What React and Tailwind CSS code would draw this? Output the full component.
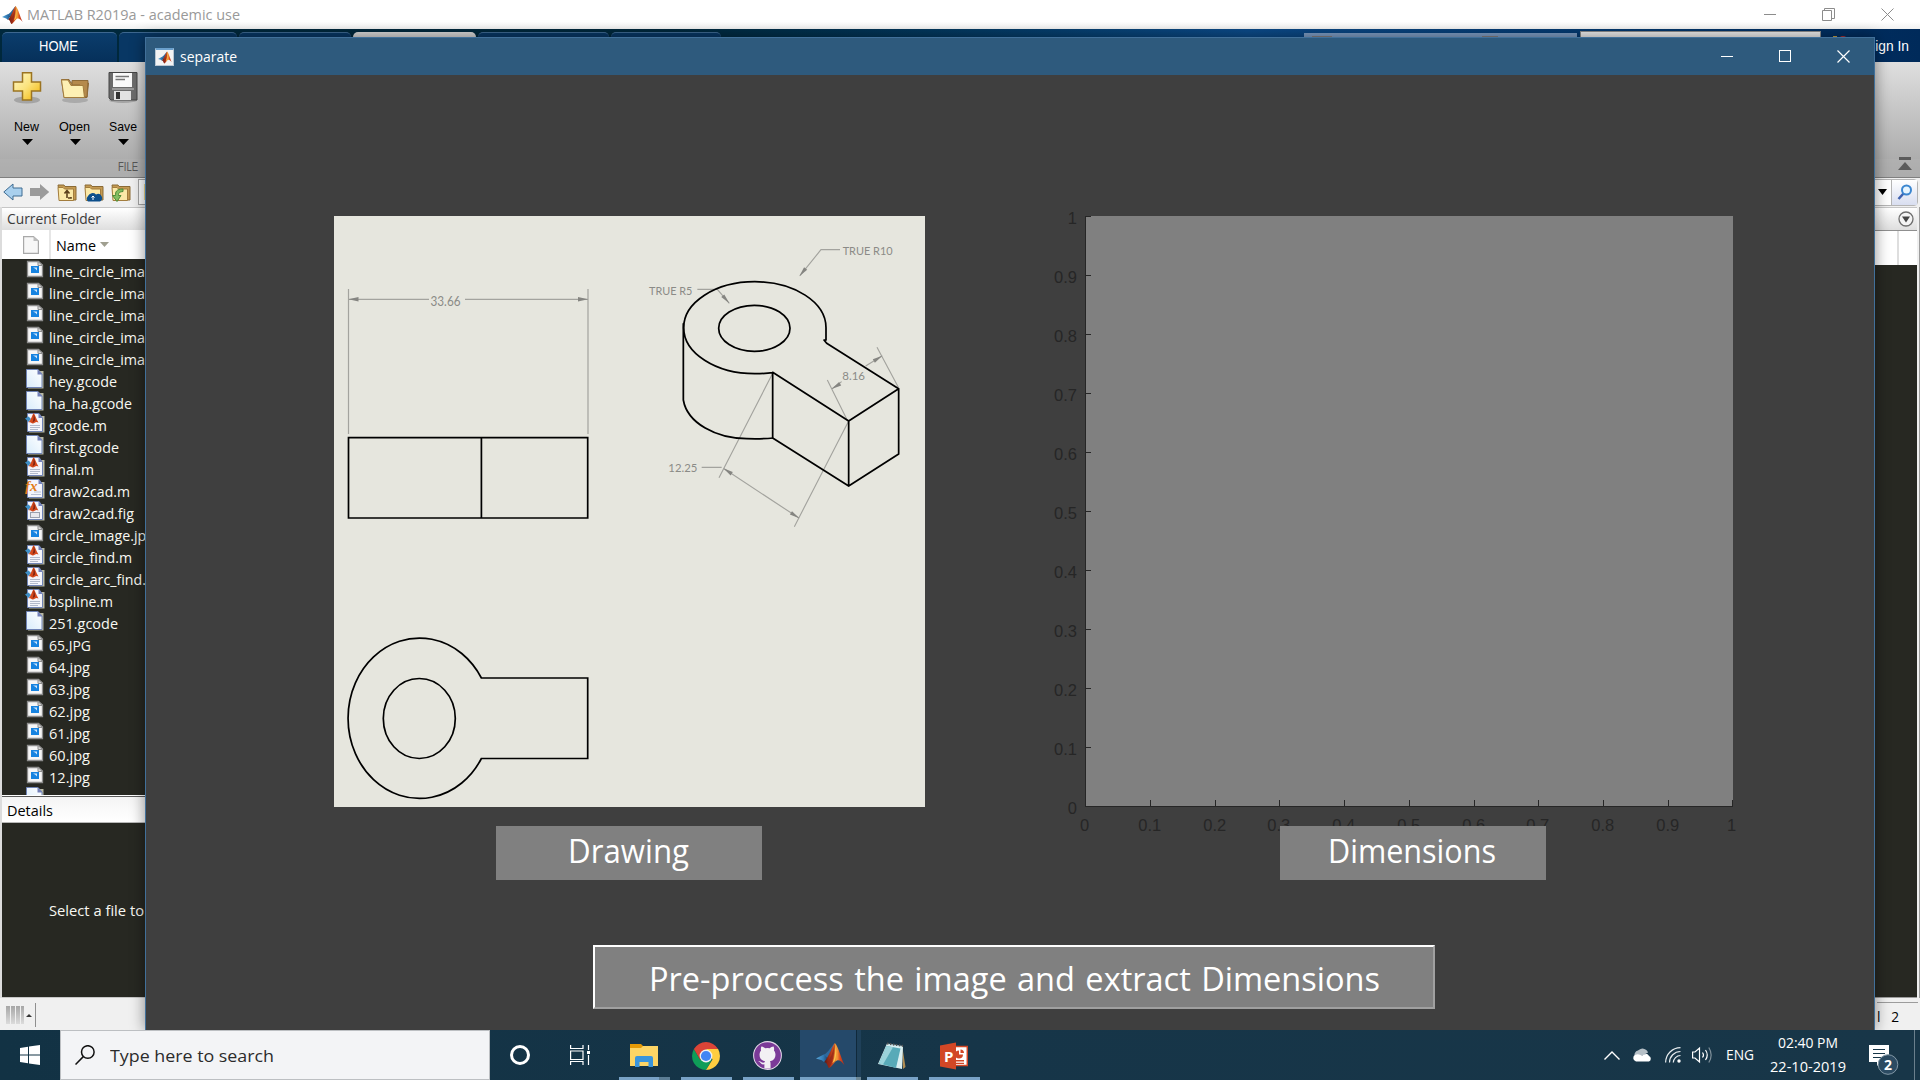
import React, { useLayoutEffect, useRef } from "react";

/* Single line of text condensed or widened to an exact advance width. */
function Fit({ w, children, className = "" }) {
  const ref = useRef(null);
  useLayoutEffect(() => {
    const el = ref.current;
    el.style.transform = "none";
    const natural = el.getBoundingClientRect().width;
    if (natural > 0) el.style.transform = `scaleX(${w / natural})`;
  }, [w, children]);
  return (
    <span className={`block shrink-0 whitespace-nowrap ${className}`} style={{ width: w }}>
      <span ref={ref} className="inline-block origin-left whitespace-pre">
        {children}
      </span>
    </span>
  );
}

function MatlabLogo({ className }) {
  return (
    <svg viewBox="0 0 30 27" className={className}>
      <defs>
        <linearGradient id="mlRed" x1="0" x2="1" y1="0" y2="0">
          <stop offset="0" stopColor="#5a1512" />
          <stop offset=".4" stopColor="#c6421c" />
          <stop offset=".62" stopColor="#f6a13a" />
          <stop offset=".78" stopColor="#d9481d" />
          <stop offset="1" stopColor="#a8291a" />
        </linearGradient>
        <linearGradient id="mlBlue" x1="0" x2="1" y1="0" y2="0">
          <stop offset="0" stopColor="#5aa7d8" />
          <stop offset=".6" stopColor="#2f79b4" />
          <stop offset="1" stopColor="#1c3c63" />
        </linearGradient>
      </defs>
      <path d="M0 16.5 8 12.5 12.5 14.5 8.5 20.5 6 18.5Z" fill="url(#mlBlue)" />
      <path d="M8 12.5C12 11 14 6.500 19.500.5L17 10 12.500 16.500Z" fill="#2d6a9f" />
      <path d="M19.500.5C16.500 4 15 11.500 8.500 20.500 10.500 19.800 12 23 13.200 26.500 17 25.500 19 19 22.500 18.500 25 18.400 27 20.500 29.500 23.500 25.500 15 23 4 19.500.5Z" fill="url(#mlRed)" />
      <path d="M19.300 1C18 6 17 14 11 21.500L13.200 26.300C17 22 19.500 12 19.300 1Z" fill="#8d2417" opacity=".65" />
      <path d="M19.500 1C20.500 7 20 14 17 21.500L19.600 19C21.500 13 21.200 6 19.500 1Z" fill="#fbc24b" />
    </svg>
  );
}

function Page({ kind }) {
  if (kind === "jpg")
    return (
      <svg viewBox="0 0 18 18" className="-mt-[4px] h-[18px] w-[18px]">
        <path d="M1.500 1.500H12.500L16.500 5V16.500H1.500Z" fill="#f6f6f6" stroke="#8d8d8d" strokeWidth="1.300" />
        <path d="M12 1.500V5.500H16.500Z" fill="#d8d8d8" stroke="#8d8d8d" />
        <rect x="5" y="6" width="8" height="7" fill="#1683e0" />
        <path d="M7 7.500H11V10.500L9.300 8.800Z" fill="#cfe6fb" />
      </svg>
    );
  if (kind === "file")
    return (
      <svg viewBox="0 0 18 20" className="-mt-[4px] h-[20px] w-[18px]">
        <defs>
          <linearGradient id="pg" x1="0" x2="1" y1="1" y2="0">
            <stop offset="0" stopColor="#d9ecfb" />
            <stop offset="1" stopColor="#ffffff" />
          </linearGradient>
        </defs>
        <path d="M2 2H17.500V19.500H2Z" fill="#b9b9a4" />
        <path d="M.500.500H12L16 5V18.500H.500Z" fill="url(#pg)" stroke="#6f83b5" />
        <path d="M11.500.500V5.500H16.500Z" fill="#7380b8" />
      </svg>
    );
  return (
    <svg viewBox="0 0 20 20" className="-ml-[1px] -mt-[4px] h-[20px] w-[20px]">
      <path d="M4 3H19.500V19.500H4Z" fill="#b9b9a4" />
      <path d="M2.500.500H14L17.500 5V18.500H2.500Z" fill="#f4f5fb" stroke="#6f83b5" />
      <path d="M13.500.500V5H17.500Z" fill="#7380b8" />
      {kind === "fx" ? (
        <>
          <path d="M9 13H16M6 15.500H16" stroke="#b9c1d2" />
          <text x="0" y="12" className="font-['Liberation_Serif'] text-[15px] font-bold italic" fill="#e27a16">
            fx
          </text>
        </>
      ) : (
        <>
          <path d="M5 12.500H15M5 14.500H15M5 16.500H13" stroke="#b3bacb" />
          {kind === "fig" && <rect x="5.500" y="11.500" width="9" height="5" fill="#e9e9ee" stroke="#9aa0ad" />}
          <path d="M0 5.500 3.500 3.500 6 6 3.500 9Z" fill="#3f8fc6" />
          <path d="M8.500 0C7 3 6 6.500 3.500 9.500 6.500 8.500 6.500 11 8 10.500 9.500 10 11 8 13.500 9.500 11 6 10.500 2 8.500 0Z" fill="#d5491c" />
          <path d="M8.500 1C9 4 8.500 7 7.500 9.500L10 7.500C10 5 9.500 3 8.500 1Z" fill="#7b2315" />
        </>
      )}
    </svg>
  );
}

const files = [
  ["line_circle_ima", "jpg", 96],
  ["line_circle_ima", "jpg", 96],
  ["line_circle_ima", "jpg", 96],
  ["line_circle_ima", "jpg", 96],
  ["line_circle_ima", "jpg", 96],
  ["hey.gcode", "file", 68],
  ["ha_ha.gcode", "file", 83],
  ["gcode.m", "m", 58],
  ["first.gcode", "file", 70],
  ["final.m", "m", 45],
  ["draw2cad.m", "fx", 81],
  ["draw2cad.fig", "fig", 85],
  ["circle_image.jpg", "jpg", 105],
  ["circle_find.m", "m", 83],
  ["circle_arc_find.m", "m", 110],
  ["bspline.m", "m", 64],
  ["251.gcode", "file", 69],
  ["65.JPG", "jpg", 42],
  ["64.jpg", "jpg", 41],
  ["63.jpg", "jpg", 41],
  ["62.jpg", "jpg", 41],
  ["61.jpg", "jpg", 41],
  ["60.jpg", "jpg", 41],
  ["12.jpg", "jpg", 41],
  ["5.mat.txt", "file", 50],
];

function Down({ className = "h-[6px] w-[11px]" }) {
  return (
    <svg viewBox="0 0 11 6" preserveAspectRatio="none" className={className}>
      <path d="M0 0H11L5.500 6Z" fill="currentColor" />
    </svg>
  );
}

function Tool({ label, w, children }) {
  return (
    <div className="flex w-12 flex-col items-center">
      <div className="flex h-[33px] items-start">{children}</div>
      <div className="mt-[13px] mr-px flex h-[18px] items-center justify-center font-['Liberation_Sans',sans-serif] text-[13px] text-black">
        <Fit w={w}>{label}</Fit>
      </div>
      <Down className="mt-[3px] ml-px h-[6px] w-[11px] text-black" />
    </div>
  );
}

function FolderIcon({ children }) {
  return (
    <svg viewBox="0 0 20 19" className="h-[19px] w-[20px]">
      <path d="M1 2H7L8 3.500H19V17H3Z" fill="#c49a52" stroke="#8a6a35" />
      <path d="M1 4.500H6L7.500 6H16.500V17.500H2Z" fill="#fbe9a8" stroke="#a37d3e" />
      {children}
    </svg>
  );
}

function MainTitle() {
  return (
    <div className="flex h-[29px] shrink-0 items-center justify-between bg-white bg-linear-to-b from-white from-75% to-[#f1f1f1] pl-0.5">
      <div className="flex items-center">
        <MatlabLogo className="h-[20px] w-[21px]" />
        <div className="ml-1 text-[15px] text-[#999999]">
          <Fit w={213}>MATLAB R2019a - academic use</Fit>
        </div>
      </div>
      <div className="mr-[26px] mb-px flex items-center gap-[46px] text-[#8c8c8c]">
        <div className="h-px w-3 bg-[#8c8c8c]" />
        <svg viewBox="0 0 13 13" className="h-[13px] w-[13px]" fill="none" stroke="currentColor">
          <path d="M.5 2.500H9.500V12.500H.500ZM2.500 2.500V.500H12.500V10.500H9.500" />
        </svg>
        <svg viewBox="0 0 13 13" className="h-[13px] w-[13px]" fill="none" stroke="currentColor">
          <path d="M.5.500 12.500 12.500M12.500.500.500 12.500" />
        </svg>
      </div>
    </div>
  );
}

function TabStrip() {
  return (
    <div className="flex h-[33px] shrink-0 items-start justify-between bg-linear-to-r from-[#00283c] from-35% via-[#0c4a88] via-65% to-[#002a5a] pt-[3px]">
      <div className="flex gap-0.5 pl-0.5">
        <div className="flex h-[30px] w-[115px] items-center justify-center rounded-t-[5px] border-t border-[#3d678f] bg-linear-to-b from-[#0b3d6c] to-[#06305a] pr-0.5 pb-0.5 font-['Liberation_Sans',sans-serif] text-[14px] text-white">
          <Fit w={39}>HOME</Fit>
        </div>
        <div className="h-[30px] w-[118px] rounded-t-[5px] border-t border-[#3d678f] bg-[#083764]" />
        <div className="h-[30px] w-[112px] rounded-t-[5px] border-t border-[#3d678f] bg-[#083764]" />
        <div className="h-[30px] w-[123px] rounded-t-[5px] bg-[#d6d6d6]" />
        <div className="h-[30px] w-[131px] rounded-t-[5px] border-t border-[#3d678f] bg-[#083764]" />
        <div className="h-[30px] w-[110px] rounded-t-[5px] border-t border-[#3d678f] bg-[#083764]" />
      </div>
      <div className="flex items-start">
        <div className="mt-px flex h-6 w-[273px] items-start gap-[150px] bg-[#7d9cc3] pt-[3px] pl-2">
          <div className="h-4 w-5 bg-[#857f80]" />
          <div className="h-4 w-4 bg-[#857f80]" />
        </div>
        <div className="ml-[3px] -mt-px h-6 w-[241px] border border-[#8a8a8a] bg-[#ececec]" />
        <div className="mt-[4px] ml-3 flex h-2 w-5">
          <div className="h-2 w-1 bg-[#c7a040]" />
          <div className="ml-0.5 h-2 w-2 rounded-full bg-[#b8302c]" />
        </div>
        <div className="mt-[4px] mr-[11px] ml-[13px] font-['Liberation_Sans',sans-serif] text-[14px] text-white">
          <Fit w={43}>Sign In</Fit>
        </div>
      </div>
    </div>
  );
}

function Ribbon() {
  return (
    <div className="flex h-[116px] shrink-0 flex-col border-b border-[#7f7f7f] bg-linear-to-b from-[#dfdfdf] to-[#a4a4a4]">
      <div className="flex h-[97px] items-start pt-[10px] pl-[3px]">
        <Tool label="New" w={25}>
          <svg viewBox="0 0 30 33" className="h-[33px] w-[30px]">
            <defs>
              <linearGradient id="plus" x1="0" x2="1" y1="0" y2="1">
                <stop offset="0" stopColor="#fff9c9" />
                <stop offset=".5" stopColor="#fbe27c" />
                <stop offset="1" stopColor="#f2b200" />
              </linearGradient>
            </defs>
            <ellipse cx="15" cy="28" rx="13" ry="3.500" fill="#8a8a8a" opacity=".6" />
            <path d="M10.500.800H19.500V10H28.500V19H19.500V28H10.500V19H1.500V10H10.500Z" fill="url(#plus)" stroke="#9b7422" strokeWidth="1.500" />
          </svg>
        </Tool>
        <Tool label="Open" w={31}>
          <svg viewBox="0 0 30 33" className="h-[33px] w-[30px]">
            <ellipse cx="15" cy="28" rx="13" ry="3" fill="#8a8a8a" opacity=".5" />
            <path d="M1.500 7.500H9L11 11H28.500L27 25.500H4Z" fill="#c39a5a" stroke="#8d6a38" />
            <path d="M12 8.500H28L27 25H20V13H12Z" fill="#b58a4c" stroke="#8d6a38" />
            <path d="M1.500 8H8L11 13.500H23L24.500 25.500H4Z" fill="#fdf0b4" stroke="#a37d3e" />
          </svg>
        </Tool>
        <Tool label="Save" w={28}>
          <svg viewBox="0 0 30 33" className="h-[33px] w-[30px]">
            <ellipse cx="15" cy="28" rx="14" ry="3" fill="#8a8a8a" opacity=".6" />
            <path d="M1 .500H29V28H3L1 26Z" fill="#6c6c6c" stroke="#444" />
            <rect x="5" y="1" width="19" height="14" fill="#fafafa" />
            <path d="M7.500 4.500H21M7.500 7.500H17" stroke="#777" strokeWidth="1.300" />
            <rect x="4" y="16" width="22" height="2" fill="#9b9b9b" />
            <rect x="6" y="19" width="17" height="9" fill="#e2e2e2" />
            <rect x="8" y="20" width="4" height="7" fill="#333" />
          </svg>
        </Tool>
      </div>
      <div className="flex h-[18px] items-center justify-between bg-[#b3b3b3]/60 pl-[118px] font-['Liberation_Sans',sans-serif] text-[12px] text-[#565656]">
        <Fit w={20} className="-mt-0.5">FILE</Fit>
        <svg viewBox="0 0 14 14" className="mr-[8px] -mt-[8px] h-[14px] w-[14px]">
          <path d="M1 0H13V3H1ZM7 5 14 13H0Z" fill="#5b5b5b" />
        </svg>
      </div>
    </div>
  );
}

function NavBar() {
  return (
    <div className="flex h-[29px] shrink-0 items-center justify-between bg-[#f0f0f0] pb-px">
      <div className="flex items-center pl-[3px]">
        <svg viewBox="0 0 20 18" className="h-[18px] w-[20px]">
          <path d="M.800 9 10 1V5H19V13H10V17Z" fill="#a9d0ee" stroke="#3f6c92" />
        </svg>
        <svg viewBox="0 0 20 18" className="ml-[7px] h-[18px] w-[20px]">
          <path d="M19.200 9 10 1V5H0V13H10V17Z" fill="#9b9b9b" />
        </svg>
        <div className="ml-[7px] flex gap-[7px]">
          <FolderIcon>
            <path d="M11 15H14V14M10 15V8M7.500 10.500 10 7.500 12.500 10.500" fill="none" stroke="#5d421c" strokeWidth="1.600" />
          </FolderIcon>
          <FolderIcon>
            <path d="M4 18.500A4 4 0 0 1 4 13 5 5 0 0 1 12 11.500 3.600 3.600 0 0 1 16 18.500Z" fill="#0d4f8b" />
            <path d="M9 17V13M7.500 14.500 9 13 10.500 14.500" stroke="#fff" fill="none" />
          </FolderIcon>
          <FolderIcon>
            <path d="M12 6C5 6 4.500 9 4.500 12.500H1.500L6 18.500 10 12.500H7.500C7.500 10 8 9 12 8.500Z" fill="#82bd62" stroke="#4d8a36" />
          </FolderIcon>
        </div>
        <div className="ml-[7px] flex h-[26px] w-[400px] items-center border border-[#a5a5a5] bg-white pl-[5px]">
          <div className="h-4 w-4 bg-[#f2d98a]" />
        </div>
      </div>
      <div className="mr-[2px] flex h-[27px] w-[60px] items-center justify-end rounded-r border border-[#b5b5b5] bg-white">
        <Down className="mr-[4px] h-[6px] w-[9px] text-black" />
        <div className="flex h-full w-[26px] items-center justify-center border-l border-[#b5b5b5] bg-linear-to-b from-white to-[#d9def0]">
          <svg viewBox="0 0 16 16" className="h-4 w-4" fill="none">
            <path d="M6.500 9.500 1.500 15" stroke="#3f62b0" strokeWidth="2.600" />
            <circle cx="9.500" cy="6" r="4.500" stroke="#3b86d0" strokeWidth="2" fill="#e7f5ff" />
          </svg>
        </div>
      </div>
    </div>
  );
}

function FolderPanel() {
  return (
    <div className="flex w-[600px] flex-col border-l-2 border-[#dcdcdc]">
      <div className="flex h-[23px] shrink-0 items-center border-t border-[#c6c6c6] bg-linear-to-b from-white to-[#dedede] pb-0.5 pl-[5px] text-[15px] text-[#3a3a3a]">
        <Fit w={94}>Current Folder</Fit>
      </div>
      <div className="flex h-[29px] shrink-0 items-center bg-white">
        <div className="flex h-full w-[49px] items-center border-r-2 border-[#e6e6e6] pl-[21px]">
          <svg viewBox="0 0 16 18" className="h-[18px] w-4">
            <path d="M.600.600H10.500L15.400 5V17.400H.600Z" fill="#f7f7f7" stroke="#a9a9a9" strokeWidth="1.200" />
            <path d="M10.500.600V5H15.400Z" fill="#bdbdbd" />
          </svg>
        </div>
        <div className="mt-0.5 ml-[5px] text-[15px] text-black">
          <Fit w={40}>Name</Fit>
        </div>
        <Down className="mb-px ml-1 h-[5px] w-[9px] text-[#a09f90]" />
      </div>
      <div className="flex h-[536px] shrink-0 flex-col overflow-hidden bg-[#272822] pt-px pl-6">
        {files.map(([name, kind, w], i) => (
          <div key={i} className="flex h-[22px] shrink-0 items-center">
            <div className="flex w-[23px] shrink-0">
              <Page kind={kind} />
            </div>
            <div className="text-[15px] leading-[22px] text-[#f8f8f2]">
              <Fit w={w}>{name}</Fit>
            </div>
          </div>
        ))}
      </div>
      <div className="flex h-7 shrink-0 items-center border-t border-b border-t-white border-b-[#b8b8b8] bg-linear-to-b from-[#f4f4f4] to-white pt-0.5 pl-[5px] text-[15px] text-black shadow-[inset_0_1px_0_#5a5a5a]">
        <Fit w={46}>Details</Fit>
      </div>
      <div className="flex h-[175px] shrink-0 items-center border-b border-[#c6c6c6] bg-[#272822] pt-px pl-[47px] text-[15px] text-[#f8f8f2]">
        <Fit w={95}>Select a file to</Fit>
      </div>
    </div>
  );
}

function EditorEdge() {
  return (
    <div className="flex w-[300px] flex-col border-r border-[#9c9c9c] pr-0.5">
      <div className="flex h-[23px] shrink-0 items-center justify-end border-t border-[#c6c6c6] bg-linear-to-b from-white to-[#dedede] pr-[3px] pb-px">
        <svg viewBox="0 0 16 16" className="h-4 w-4">
          <circle cx="8" cy="8" r="7" fill="#f4f4f4" stroke="#6e6e6e" strokeWidth="1.300" />
          <path d="M4 5.500H12L8 11.500Z" fill="#444" />
        </svg>
      </div>
      <div className="flex h-[35px] shrink-0 justify-end border-t border-[#8f8f8f] bg-white">
        <div className="w-5 border-l-2 border-[#dedede]" />
      </div>
      <div className="grow border-b border-[#9c9c9c] bg-[#272822]" />
    </div>
  );
}

function StatusBar() {
  return (
    <div className="flex h-8 shrink-0 items-center justify-between bg-[#f0f0f0]">
      <div className="mt-0.5 flex h-full items-center pl-1.5">
        <div className="flex gap-px">
          <div className="h-[18px] w-1 bg-linear-to-b from-[#a6a6a6] to-[#dcdcdc]" />
          <div className="h-[18px] w-1 bg-linear-to-b from-[#a6a6a6] to-[#dcdcdc]" />
          <div className="h-[18px] w-1 bg-linear-to-b from-[#a6a6a6] to-[#dcdcdc]" />
          <div className="h-[18px] w-[3px] bg-linear-to-b from-[#a6a6a6] to-[#dcdcdc]" />
        </div>
        <Down className="ml-0.5 h-[3px] w-[6px] rotate-180 text-[#333]" />
        <div className="ml-[3px] h-6 w-px bg-[#8f8f8f]" />
      </div>
      <div className="mt-0.5 mr-0.5 flex h-[26px] items-center justify-end border-t border-[#9c9c9c] pt-0.5 pr-[19px] text-[15px] text-black">
        <Fit w={22}>l   2</Fit>
      </div>
    </div>
  );
}

function Arrow({ x, y, a }) {
  return <path d="M0 0 30 -6V6Z" transform={`translate(${x} ${y}) rotate(${a})`} fill="#858581" />;
}

/* Bracket drawing: two orthographic views and an isometric view with dimensions. */
function PartDrawing() {
  return (
    <svg viewBox="334 216 591 591" className="mt-[141px] ml-[188px] h-[591px] w-[591px] bg-[#e6e6de]">
      <g fill="none" stroke="#a3a39e" strokeWidth="1.200">
        <path d="M348.500 289V434M588 289V434M348.500 299.300H429M465 299.300H588" />
      </g>
      <path d="M348.500 299.300 358.500 297V301.600ZM588 299.300 578 297V301.600Z" fill="#858581" />
      <text x="430.500" y="305.500" textLength="30" lengthAdjust="spacingAndGlyphs" className="font-['Lato'] text-[12.500px]" fill="#8b8b87">
        33.66
      </text>
      <g fill="none" stroke="#000" strokeWidth="1.700">
        <path d="M348.500 437.700H587.700V518H348.500ZM481.400 438V518" />
        <path d="M481.400 678A71.500 80.200 0 1 0 481.400 758.500H587.700V678Z" />
        <ellipse cx="419.300" cy="718.500" rx="36" ry="40" />
      </g>
      <g transform="translate(630 210) scale(.33333)">
        <g fill="none" stroke="#a3a39e" strokeWidth="3.400">
          <path d="M428 490 267 803M656 633 493 950M280 775 508 925M215 772H275M592 510 653 633M741 412 805 532M605 537 635 515M707 468 757 437M510 197 573 119H630M202 238H262L298 280" />
        </g>
        <Arrow x="280" y="775" a="33" />
        <Arrow x="508" y="925" a="213" />
        <Arrow x="605" y="537" a="-32" />
        <Arrow x="757" y="437" a="148" />
        <Arrow x="508" y="199" a="-51" />
        <Arrow x="298" y="280" a="229" />
        <g fill="none" stroke="#000" strokeWidth="5.200" strokeLinejoin="round">
          <path d="M428 488C410 491 395 491 375 491A213.500 138 0 1 1 588 353V390L582 390 590 400 806 536 656 633 428 487V684L656 828 806 732V536M656 633V828" />
          <path d="M160 340V570C172 640 260 686 350 686 380 687 410 686 430 684" />
          <ellipse cx="373" cy="355" rx="107" ry="69" />
        </g>
        <g className="font-['Lato'] text-[37px]" fill="#8b8b87">
          <text x="57" y="254" textLength="130" lengthAdjust="spacingAndGlyphs">TRUE R5</text>
          <text x="638" y="135" textLength="150" lengthAdjust="spacingAndGlyphs">TRUE R10</text>
          <text x="115" y="785" textLength="87" lengthAdjust="spacingAndGlyphs">12.25</text>
          <text x="637" y="510" textLength="68" lengthAdjust="spacingAndGlyphs">8.16</text>
        </g>
      </g>
    </svg>
  );
}

const ticks = [0, 0.1, 0.2, 0.3, 0.4, 0.5, 0.6, 0.7, 0.8, 0.9, 1];

function Axes() {
  return (
    <svg viewBox="1045 206 710 640" className="mt-[131px] ml-[120px] h-[640px] w-[710px]">
      <rect x="1085" y="216" width="648" height="591" fill="#808080" />
      <path d="M1085.500 216V806.500H1733" fill="none" stroke="#262626" />
      <g className="font-['Liberation_Sans'] text-[16.500px]" fill="#262626">
        {ticks.map((t, i) => {
          const x = Math.round(1085 + 64.750 * i) + 0.5 - (i === 10 ? 1 : 0);
          const y = Math.round(806 - 59 * i) + 0.5;
          return (
            <g key={t}>
              <path d={`M${x} 806V800M1085 ${y}H1091`} stroke="#262626" />
              <text x={x - 0.8} y="831" textAnchor="middle">{t}</text>
              <text x="1077" y={y + 7} textAnchor="end">{t}</text>
            </g>
          );
        })}
      </g>
    </svg>
  );
}

function Caption({ w, className, children }) {
  return (
    <div className={`relative flex h-[54px] w-[266px] items-center justify-center bg-[#808080] pr-0.5 pb-1.5 font-['Open_Sans',sans-serif] text-[33px] leading-none text-white ${className}`}>
      <Fit w={w}>{children}</Fit>
    </div>
  );
}

function FigureWindow() {
  return (
    <div className="absolute top-[37px] left-[145px] flex h-[993px] w-[1730px] flex-col border-x border-t border-[#41709a] bg-[#3f3f3f] shadow-[0_0_14px_rgba(0,0,0,0.45)]">
      <div className="flex h-[37px] shrink-0 items-center justify-between bg-[#2e5a7d] pl-[9px]">
        <div className="flex items-center">
          <div className="flex h-[18px] w-[19px] items-center justify-center border border-t-2 border-[#b9c6d2] border-t-[#6ba0cc] bg-[#f3f3f3]">
            <MatlabLogo className="h-[13px] w-[14px]" />
          </div>
          <div className="ml-1.5 text-[15px] text-white">
            <Fit w={57}>separate</Fit>
          </div>
        </div>
        <div className="mr-6 flex items-center gap-[46px] pb-px text-white">
          <div className="h-px w-3 bg-white" />
          <div className="h-3 w-3 border border-white" />
          <svg viewBox="0 0 13 13" className="h-[13px] w-[13px]" fill="none" stroke="currentColor" strokeWidth="1.200">
            <path d="M.5.500 12.500 12.500M12.500.500.500 12.500" />
          </svg>
        </div>
      </div>
      <div className="flex shrink-0 items-start">
        <div className="flex flex-col">
          <PartDrawing />
          <Caption w={121} className="mt-[19px] ml-[350px]">Drawing</Caption>
        </div>
        <div className="flex flex-col">
          <Axes />
          <Caption w={168} className="-mt-5 ml-[355px]">Dimensions</Caption>
        </div>
      </div>
      <div className="mt-[65px] ml-[447px] flex h-16 w-[842px] shrink-0 items-center justify-center border-2 border-t-white border-r-[#a0a0a0] border-b-[#a0a0a0] border-l-white bg-[#808080] pt-0.5 font-['Open_Sans',sans-serif] text-[33px] leading-none text-white [word-spacing:2px]">
        <Fit w={731}>Pre-proccess the image and extract Dimensions</Fit>
      </div>
    </div>
  );
}

function TaskItem({ active, stacked, children }) {
  return (
    <div className={`flex h-full flex-col ${active ? "w-[61px]" : "w-[51px]"}`}>
      <div className="flex h-[47px]">
        <div className={`flex h-full items-center justify-center ${active ? "w-[56px] bg-[#25496a]" : "w-full pr-0.5"}`}>{children}</div>
        {active && <div className="h-full w-[5px] border-l border-[#10293b] bg-[#1f4059]" />}
      </div>
      <div className="flex h-[3px]">
        <div className="h-full grow bg-[#78a2c6]" />
        {stacked && <div className="h-full w-[11px] bg-[#5b7d94]" />}
        {active && <div className="h-full w-[5px] bg-[#6d8795]" />}
      </div>
    </div>
  );
}

function Taskbar() {
  return (
    <div className="relative z-10 flex h-[50px] shrink-0 items-stretch justify-between bg-linear-to-r from-[#123244] via-[#163548] to-[#183648] text-white">
      <div className="flex">
        <div className="flex w-[60px] items-center justify-center">
          <svg viewBox="0 0 20 20" className="h-5 w-5" fill="#fff">
            <path d="M0 2.900 8 1.700V9.400H0ZM9 1.500 20 0V9.400H9ZM0 10.400H8V18.200L0 17.100ZM9 10.400H20V20L9 18.400Z" />
          </svg>
        </div>
        <div className="flex w-[430px] items-center border border-[#bcbfc2] bg-[#f3f4f6] pl-[14px]">
          <svg viewBox="0 0 20 20" className="h-5 w-5" fill="none" stroke="#111" strokeWidth="1.500">
            <circle cx="12.800" cy="7" r="6.300" />
            <path d="M8.300 11.600.500 19.500" />
          </svg>
          <div className="mt-px ml-[15px] text-[17px] text-[#2b2b2b]">
            <Fit w={164}>Type here to search</Fit>
          </div>
        </div>
        <div className="flex w-[60px] items-center justify-center">
          <div className="h-5 w-5 rounded-full border-[3px] border-white" />
        </div>
        <div className="flex w-[60px] items-center justify-center">
          <svg viewBox="0 0 20 20" className="h-5 w-5" fill="none" stroke="#fff" strokeWidth="1.200">
            <path d="M.600 0V3.500H13V0M.600 6H13V14.500H.600ZM.600 20V16.500H13V20M18.500 0V5M18.500 10V20" />
            <rect x="17" y="6" width="3" height="3" fill="#fff" stroke="none" />
          </svg>
        </div>
        <div className="ml-[9px] flex items-stretch">
          <TaskItem stacked>
            <svg viewBox="0 0 28 24" className="mt-1 h-6 w-7">
              <path d="M0 0H11L13 2V6H0Z" fill="#e59a06" />
              <path d="M0 4H11L13 2H28V22H0Z" fill="#fdd565" />
              <path d="M5 23V14Q5 12 7 12H21Q23 12 23 14V23H18.500V18H9.500V23Z" fill="#3a95dc" />
            </svg>
          </TaskItem>
          <div className="w-[11px]" />
          <TaskItem>
            <svg viewBox="0 0 28 28" className="mt-1 h-7 w-7">
              <path d="M1.900 7A14 14 0 0 0 14 28L20 17.500 14 14 8 17.500Z" fill="#0f9d58" />
              <path d="M14 14 8 17.500 1.900 7A14 14 0 0 1 26.100 7H14Z" fill="#db4437" />
              <path d="M14 7H26.100A14 14 0 0 1 14 28L20.500 17.500Z" fill="#ffcd40" />
              <circle cx="14" cy="14" r="6.400" fill="#f1f1f1" />
              <circle cx="14" cy="14" r="5.100" fill="#4285f4" />
            </svg>
          </TaskItem>
          <div className="w-[11px]" />
          <TaskItem>
            <svg viewBox="0 0 28 28" className="mt-1 h-[29px] w-[29px]">
              <circle cx="14" cy="14" r="13.400" fill="#7b3a98" stroke="#e3d9e8" />
              <path d="M11 26.500V22.500C8 23 7.500 21 6.500 20.200L5 19.300C7 18.800 8 21.500 11 20.800L11.600 19.500C8 18.800 6.300 16.500 6.300 13.200 6.300 11.500 7 10.200 7.800 9.200 7.400 7.800 7.600 6.500 8.100 5.400 9.600 5.500 10.700 6.200 11.800 7A11 11 0 0 1 16.200 7C17.300 6.200 18.400 5.500 19.900 5.400 20.400 6.500 20.600 7.800 20.200 9.200 21 10.200 21.700 11.500 21.700 13.200 21.700 16.500 20 18.800 16.400 19.500 17 20.500 17 21.500 17 26.500Z" fill="#f2f0f3" />
            </svg>
          </TaskItem>
          <div className="w-[6px]" />
          <TaskItem active>
            <MatlabLogo className="mt-1 ml-1 h-[27px] w-[29px]" />
          </TaskItem>
          <div className="w-[6px]" />
          <TaskItem>
            <svg viewBox="0 0 28 28" className="mt-1 h-7 w-7">
              <path d="M24 3 27.500 25 25 27Z" fill="#b08d52" />
              <path d="M9 1.500 25 4 24 27 0 22Z" fill="#d8eef1" />
              <path d="M8.500 4 22.500 6.500 18 26 1 21.500Z" fill="#58aab8" />
              <path d="M8.500 4 15 5.200 5 22.500 1 21.500Z" fill="#9bd3db" />
              <path d="M9 1.500 25 4" stroke="#555" strokeWidth="2" strokeDasharray="1.500 1.500" />
            </svg>
          </TaskItem>
          <div className="w-[11px]" />
          <TaskItem>
            <svg viewBox="0 0 28 28" className="mt-1 h-7 w-7">
              <rect x="13" y="4.500" width="14.300" height="19" fill="#fff" stroke="#d24726" strokeWidth="1.500" />
              <path d="M19 8.500A4 4 0 1 0 23 12.500H19Z" fill="#d24726" />
              <path d="M20.500 7.500A3.600 3.600 0 0 1 24 11H20.500ZM16 18H24V19.500H16ZM16 20.800H24V22H16Z" fill="#d24726" />
              <path d="M0 3.500 16 .500V27.500L0 24.500Z" fill="#d24726" />
              <text x="4" y="19.500" className="font-['Open_Sans'] text-[15px] font-bold" fill="#fff">P</text>
            </svg>
          </TaskItem>
        </div>
      </div>
      <div className="flex items-center text-[14.500px]">
        <svg viewBox="0 0 16 9" className="h-[9px] w-4" fill="none" stroke="#fff" strokeWidth="1.400">
          <path d="M.500 8.500 8 1 15.500 8.500" />
        </svg>
        <svg viewBox="0 0 20 14" className="ml-3 h-[14px] w-5">
          <path d="M3 9A4.500 4.500 0 0 1 6 2.500 6 6 0 0 1 16 4.500L10 8Z" fill="#b5bfc6" />
          <path d="M4 13.500A3.500 3.500 0 0 1 3.500 6.800C6 5.500 8 6.500 10 8 12 5.500 16 5 17 8A3 3 0 0 1 17 13.500Z" fill="#fff" />
        </svg>
        <svg viewBox="0 0 16 16" className="ml-[13px] h-4 w-4" fill="none" stroke="#e8edf0" strokeWidth="1.200">
          <path d="M.600 15.500A15 15 0 0 1 15.500.600M4.500 15.500A11 11 0 0 1 15.500 4.500M8.300 15.500A7.300 7.300 0 0 1 15.500 8.500" />
          <circle cx="14" cy="14" r="1.700" fill="#fff" stroke="none" />
        </svg>
        <svg viewBox="0 0 20 18" className="ml-[11px] h-[18px] w-5" fill="none" stroke="#fff" strokeWidth="1.200">
          <path d="M.600 6H3L7.500 2V16L3 12H.600ZM10.500 6.500Q12.500 9 10.500 11.500M13.500 4Q17 9 13.500 14" />
          <path d="M16.800 1.500Q21.500 9 16.800 16.500" opacity=".45" />
        </svg>
        <div className="ml-[14px]">
          <Fit w={28}>ENG</Fit>
        </div>
        <div className="ml-4 flex flex-col items-center leading-[24px]">
          <Fit w={60}>02:40 PM</Fit>
          <Fit w={76}>22-10-2019</Fit>
        </div>
        <svg viewBox="0 0 32 32" className="mt-2.5 ml-[22px] h-8 w-8">
          <path d="M1 1H21V18H13L9 22V18H1Z" fill="#fff" />
          <path d="M5 5.500H17M5 9.500H17M5 13.500H13" stroke="#183648" />
          <circle cx="20" cy="20.500" r="9.800" fill="#2c4b62" stroke="#8398a6" />
          <text x="20" y="25.500" textAnchor="middle" className="font-['Open_Sans'] text-[14px] font-bold" fill="#fff">2</text>
        </svg>
        <div className="mr-[5px] ml-[14px] h-full w-px bg-[#6a7f8c]" />
      </div>
    </div>
  );
}

export default function App() {
  return (
    <div className="relative flex h-[1080px] w-[1920px] flex-col overflow-hidden bg-[#f0f0f0] font-['Open_Sans','Noto_Sans',sans-serif] leading-normal">
      <MainTitle />
      <TabStrip />
      <Ribbon />
      <NavBar />
      <div className="flex h-[791px] shrink-0 justify-between">
        <FolderPanel />
        <EditorEdge />
      </div>
      <StatusBar />
      <FigureWindow />
      <Taskbar />
    </div>
  );
}
